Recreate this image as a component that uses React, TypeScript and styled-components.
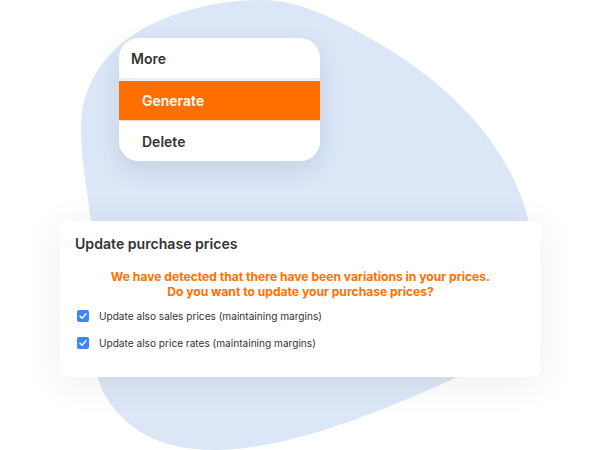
import React from 'react';
import styled, { createGlobalStyle } from 'styled-components';

const GlobalStyle = createGlobalStyle`
  html, body {
    margin: 0;
    padding: 0;
    background: #ffffff;
  }
  body {
    font-family: Inter, 'Noto Sans', sans-serif;
    color: #333333;
  }
`;

type MenuItemProps = { $active?: boolean };

const menuItems = [
  { label: 'Generate', active: true },
  { label: 'Delete', active: false },
];

const options = [
  'Update also sales prices (maintaining margins)',
  'Update also price rates (maintaining margins)',
];

const Blob = () => (
  <BlobSvg width="601" height="450" viewBox="0 0 601 450">
    <path
      d="M 262 0
         C 300 0, 340 20, 390 50
         C 470 100, 527 170, 533 250
         C 538 320, 500 360, 440 385
         C 360 420, 280 450, 215 450
         C 160 450, 125 430, 105 395
         C 90 370, 95 330, 95 280
         C 95 220, 80 170, 81 125
         C 82 80, 110 45, 150 25
         C 185 8, 225 0, 262 0 Z"
      fill="#dbe7f6"
    />
  </BlobSvg>
);

const Check = () => (
  <CheckBox>
    <svg width="12" height="12" viewBox="0 0 12 12">
      <path d="M3 6.2 L5.1 8.2 L9 3.8" fill="none" stroke="#fff" strokeWidth="1.4" strokeLinecap="round" strokeLinejoin="round" />
    </svg>
  </CheckBox>
);

export default function App() {
  return (
    <Page>
      <GlobalStyle />
      <Blob />
      <Content>
        <Menu>
          <MenuHeader>More</MenuHeader>
          <Separator />
          {menuItems.map((item) => (
            <MenuItem key={item.label} $active={item.active}>
              {item.label}
            </MenuItem>
          ))}
        </Menu>

        <Dialog>
          <DialogTitle>Update purchase prices</DialogTitle>
          <Warning>
            We have detected that there have been variations in your prices.
            <br />
            Do you want to update your purchase prices?
          </Warning>
          <Options>
            {options.map((opt) => (
              <OptionRow key={opt}>
                <Check />
                <OptionLabel>{opt}</OptionLabel>
              </OptionRow>
            ))}
          </Options>
        </Dialog>
      </Content>
    </Page>
  );
}

const Page = styled.div`
  position: relative;
  width: 601px;
  height: 450px;
  overflow: hidden;
  background: #ffffff;
`;

const BlobSvg = styled.svg`
  position: absolute;
  left: 0;
  top: 0;
`;

const Content = styled.div`
  position: relative;
  display: flex;
  flex-direction: column;
  align-items: flex-start;
  padding-top: 38px;
`;

const Menu = styled.div`
  margin-left: 119px;
  width: 201px;
  background: #ffffff;
  border-radius: 20px;
  overflow: hidden;
  box-shadow: 0 8px 24px rgba(40, 70, 120, 0.14);
  display: flex;
  flex-direction: column;
`;

const MenuHeader = styled.div`
  height: 40px;
  display: flex;
  align-items: center;
  padding-left: 12px;
  font-size: 14px;
  font-weight: 600;
  color: #333333;
`;

const Separator = styled.div`
  height: 3px;
  background: #efefef;
`;

const MenuItem = styled.div<MenuItemProps>`
  height: ${(p) => (p.$active ? '39px' : '40px')};
  display: flex;
  align-items: center;
  padding-left: 23px;
  font-size: 14px;
  font-weight: 600;
  color: ${(p) => (p.$active ? '#ffffff' : '#333333')};
  background: ${(p) => (p.$active ? '#ff6f00' : '#ffffff')};
  border-bottom: ${(p) => (p.$active ? '1px solid #ffd9bd' : 'none')};
`;

const Dialog = styled.div`
  margin-top: 60px;
  margin-left: 60px;
  width: 481px;
  height: 156px;
  box-sizing: border-box;
  padding: 14px 15px 0;
  background: #ffffff;
  border-radius: 8px;
  box-shadow: 0 6px 40px rgba(0, 0, 0, 0.07);
`;

const DialogTitle = styled.div`
  font-size: 14.1px;
  line-height: 18px;
  font-weight: 600;
  color: #333333;
`;

const Warning = styled.div`
  margin-top: 16px;
  text-align: center;
  font-size: 12.1px;
  line-height: 15px;
  font-weight: 700;
  color: #ff7000;
`;

const Options = styled.div`
  margin-top: 9px;
  display: flex;
  flex-direction: column;
  gap: 11px;
  padding-left: 2px;
`;

const OptionRow = styled.div`
  display: flex;
  align-items: center;
  gap: 10px;
  height: 16px;
`;

const CheckBox = styled.span`
  width: 12px;
  height: 12px;
  border-radius: 2px;
  background: #3d86f5;
  display: flex;
  align-items: center;
  justify-content: center;
`;

const OptionLabel = styled.span`
  font-size: 10.1px;
  color: #333333;
`;
